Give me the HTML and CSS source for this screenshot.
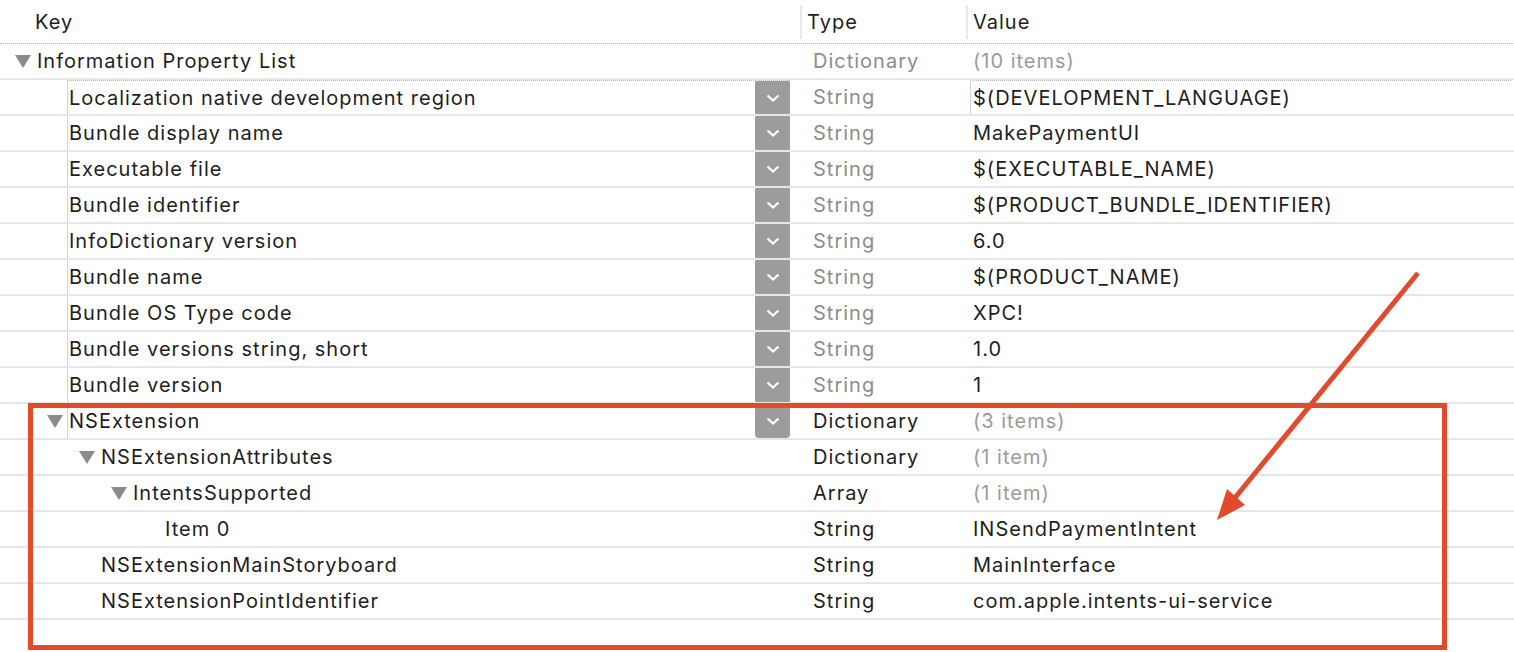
FILE: index.html
```html
<!DOCTYPE html>
<html>
<head>
<meta charset="utf-8">
<link rel="stylesheet" href="styles.css">
</head>
<body>
<div class="editor">
  <div class="header">
    <div class="hkey">Key</div>
    <div class="htype">Type</div>
    <div class="hvalue">Value</div>
  </div>

  <div class="row">
    <div class="key l0"><span class="tri"></span><span class="label">Information Property List</span></div>
    <div class="type dim">Dictionary</div>
    <div class="value dim2">(10 items)</div>
  </div>

  <div class="row">
    <div class="key l1"><span class="slot"></span><div class="field first"><span class="ftext">Localization native development region</span><span class="combo"><svg width="14" height="8" viewBox="0 0 14 8"><path d="M1.5 1.5 L7 6.5 L12.5 1.5" fill="none" stroke="#fff" stroke-width="2.2"/></svg></span></div></div>
    <div class="type dim">String</div>
    <div class="value"><div class="vfield">$(DEVELOPMENT_LANGUAGE)</div></div>
  </div>

  <div class="row">
    <div class="key l1"><span class="slot"></span><div class="field"><span class="ftext">Bundle display name</span><span class="combo"><svg width="14" height="8" viewBox="0 0 14 8"><path d="M1.5 1.5 L7 6.5 L12.5 1.5" fill="none" stroke="#fff" stroke-width="2.2"/></svg></span></div></div>
    <div class="type dim">String</div>
    <div class="value">MakePaymentUI</div>
  </div>

  <div class="row">
    <div class="key l1"><span class="slot"></span><div class="field"><span class="ftext">Executable file</span><span class="combo"><svg width="14" height="8" viewBox="0 0 14 8"><path d="M1.5 1.5 L7 6.5 L12.5 1.5" fill="none" stroke="#fff" stroke-width="2.2"/></svg></span></div></div>
    <div class="type dim">String</div>
    <div class="value">$(EXECUTABLE_NAME)</div>
  </div>

  <div class="row">
    <div class="key l1"><span class="slot"></span><div class="field"><span class="ftext">Bundle identifier</span><span class="combo"><svg width="14" height="8" viewBox="0 0 14 8"><path d="M1.5 1.5 L7 6.5 L12.5 1.5" fill="none" stroke="#fff" stroke-width="2.2"/></svg></span></div></div>
    <div class="type dim">String</div>
    <div class="value">$(PRODUCT_BUNDLE_IDENTIFIER)</div>
  </div>

  <div class="row">
    <div class="key l1"><span class="slot"></span><div class="field"><span class="ftext">InfoDictionary version</span><span class="combo"><svg width="14" height="8" viewBox="0 0 14 8"><path d="M1.5 1.5 L7 6.5 L12.5 1.5" fill="none" stroke="#fff" stroke-width="2.2"/></svg></span></div></div>
    <div class="type dim">String</div>
    <div class="value">6.0</div>
  </div>

  <div class="row">
    <div class="key l1"><span class="slot"></span><div class="field"><span class="ftext">Bundle name</span><span class="combo"><svg width="14" height="8" viewBox="0 0 14 8"><path d="M1.5 1.5 L7 6.5 L12.5 1.5" fill="none" stroke="#fff" stroke-width="2.2"/></svg></span></div></div>
    <div class="type dim">String</div>
    <div class="value">$(PRODUCT_NAME)</div>
  </div>

  <div class="row">
    <div class="key l1"><span class="slot"></span><div class="field"><span class="ftext">Bundle OS Type code</span><span class="combo"><svg width="14" height="8" viewBox="0 0 14 8"><path d="M1.5 1.5 L7 6.5 L12.5 1.5" fill="none" stroke="#fff" stroke-width="2.2"/></svg></span></div></div>
    <div class="type dim">String</div>
    <div class="value">XPC!</div>
  </div>

  <div class="row">
    <div class="key l1"><span class="slot"></span><div class="field"><span class="ftext">Bundle versions string, short</span><span class="combo"><svg width="14" height="8" viewBox="0 0 14 8"><path d="M1.5 1.5 L7 6.5 L12.5 1.5" fill="none" stroke="#fff" stroke-width="2.2"/></svg></span></div></div>
    <div class="type dim">String</div>
    <div class="value">1.0</div>
  </div>

  <div class="row">
    <div class="key l1"><span class="slot"></span><div class="field"><span class="ftext">Bundle version</span><span class="combo"><svg width="14" height="8" viewBox="0 0 14 8"><path d="M1.5 1.5 L7 6.5 L12.5 1.5" fill="none" stroke="#fff" stroke-width="2.2"/></svg></span></div></div>
    <div class="type dim">String</div>
    <div class="value">1</div>
  </div>

  <div class="row">
    <div class="key l1"><span class="tri"></span><div class="field"><span class="ftext">NSExtension</span><span class="combo last"><svg width="14" height="8" viewBox="0 0 14 8"><path d="M1.5 1.5 L7 6.5 L12.5 1.5" fill="none" stroke="#fff" stroke-width="2.2"/></svg></span></div></div>
    <div class="type">Dictionary</div>
    <div class="value dim2">(3 items)</div>
  </div>

  <div class="row">
    <div class="key l2"><span class="tri"></span><span class="label">NSExtensionAttributes</span></div>
    <div class="type">Dictionary</div>
    <div class="value dim2">(1 item)</div>
  </div>

  <div class="row">
    <div class="key l3"><span class="tri"></span><span class="label">IntentsSupported</span></div>
    <div class="type">Array</div>
    <div class="value dim2">(1 item)</div>
  </div>

  <div class="row">
    <div class="key l4"><span class="slot"></span><span class="label">Item 0</span></div>
    <div class="type">String</div>
    <div class="value">INSendPaymentIntent</div>
  </div>

  <div class="row">
    <div class="key l2"><span class="slot"></span><span class="label">NSExtensionMainStoryboard</span></div>
    <div class="type">String</div>
    <div class="value">MainInterface</div>
  </div>

  <div class="row">
    <div class="key l2"><span class="slot"></span><span class="label">NSExtensionPointIdentifier</span></div>
    <div class="type">String</div>
    <div class="value">com.apple.intents-ui-service</div>
  </div>

  <div class="row empty"></div>
</div>

<div class="highlight"></div>
<svg class="arrow" width="1514" height="652" viewBox="0 0 1514 652">
  <line x1="1418" y1="273" x2="1234" y2="499" stroke="#e14a2a" stroke-width="5"/>
  <polygon points="1217,520 1245,505 1227,489" fill="#e14a2a"/>
</svg>
</body>
</html>
```

FILE: styles.css
```css
* { box-sizing: border-box; }

html, body {
  margin: 0;
  padding: 0;
  background: #ffffff;
}

body {
  width: 1514px;
  height: 652px;
  overflow: hidden;
  position: relative;
  font-family: "Inter", "Liberation Sans", sans-serif;
  font-size: 20px;
  letter-spacing: 1px;
  color: #1e1e1e;
}

.editor {
  display: flex;
  flex-direction: column;
}

.header {
  height: 44px;
  display: grid;
  grid-template-columns: 800px 166px 1fr;
  align-items: center;
  border-bottom: 1px dotted #b8b8b8;
}

.hkey { padding-left: 35px; }
.htype, .hvalue {
  padding-left: 5px;
  border-left: 2px solid #e8e8e8;
  height: 34px;
  display: flex;
  align-items: center;
}

.row {
  height: 36px;
  display: grid;
  grid-template-columns: 800px 166px 1fr;
  align-items: stretch;
  border-bottom: 2px solid #e6e6e6;
}

.row.empty { height: 32px; border-bottom: none; }

.key {
  display: flex;
  align-items: center;
}
.l0 { padding-left: 15px; }
.l1 { padding-left: 47px; }
.l2 { padding-left: 79px; }
.l3 { padding-left: 111px; }
.l4 { padding-left: 143px; }

.tri {
  width: 0;
  height: 0;
  border-left: 8px solid transparent;
  border-right: 8px solid transparent;
  border-top: 13px solid #8b8b8b;
  margin-right: 4px;
  margin-top: 1px;
}
.slot { width: 20px; }

.label { padding-left: 2px; }

.field {
  width: 723px;
  height: 100%;
  display: flex;
  align-items: center;
  border-left: 1px solid #d4d4d4;
  padding-left: 1px;
}
.field.first { border-top: 1px dotted #bdbdbd; }

.ftext { flex: 1; }

.combo {
  width: 35px;
  align-self: stretch;
  background: #9c9c9c;
  display: flex;
  align-items: center;
  justify-content: center;
  border-radius: 1px;
}
.combo.last { border-radius: 0 0 4px 4px; }

.type {
  display: flex;
  align-items: center;
  padding-left: 13px;
}
.value {
  display: flex;
  align-items: center;
  padding-left: 7px;
}
.vfield {
  height: 100%;
  width: 100%;
  display: flex;
  align-items: center;
  border-left: 1px solid #d4d4d4;
  border-top: 1px dotted #bdbdbd;
  margin-left: -3px;
  padding-left: 2px;
}

.dim { color: #8d8d8d; }
.dim2 { color: #9a9a9a; }

.highlight {
  position: absolute;
  left: 28px;
  top: 403px;
  width: 1419px;
  height: 247px;
  border: 5px solid #e14a2a;
}

.arrow {
  position: absolute;
  left: 0;
  top: 0;
}
```
